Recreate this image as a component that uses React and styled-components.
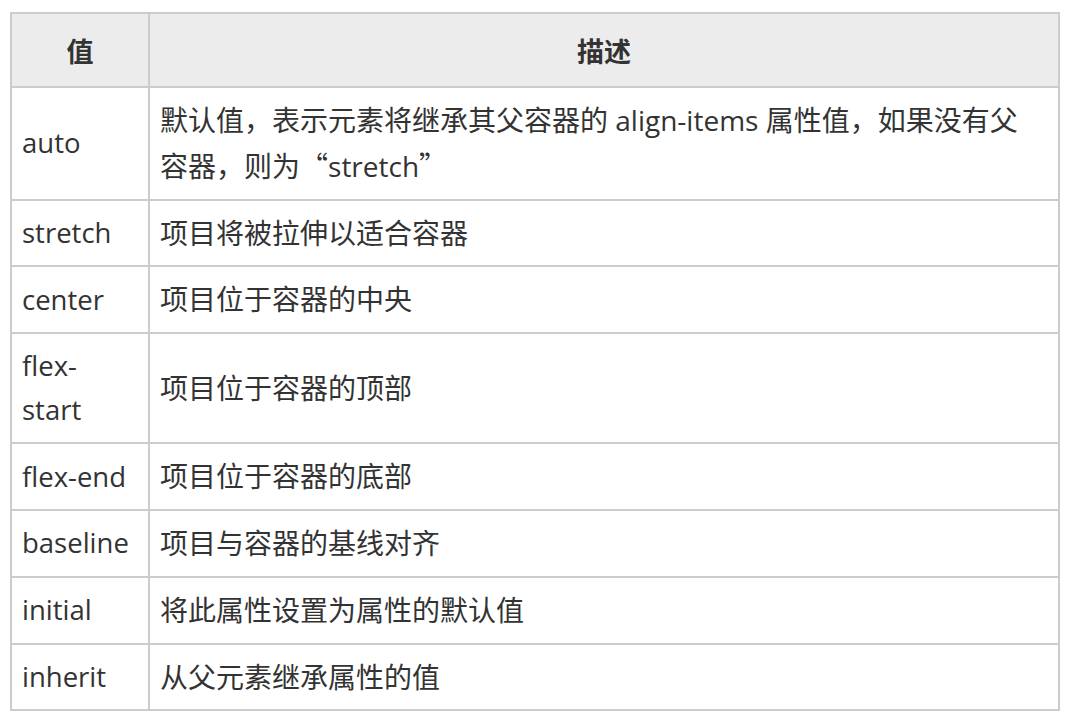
import styled, { createGlobalStyle } from "styled-components";

function App() {
  return (
    <>
      <GlobalStyle />
      <PageWrapper>
        <PropTable>
          <colgroup>
            <col style={{ width: "138px" }} />
            <col />
          </colgroup>
          <thead>
            <tr>
              <HeadCell>值</HeadCell>
              <HeadCell>描述</HeadCell>
            </tr>
          </thead>
          <tbody>
            {rows.map((row) => (
              <tr key={row.value}>
                <ValueCell>{row.value}</ValueCell>
                <BodyCell>{row.desc}</BodyCell>
              </tr>
            ))}
          </tbody>
        </PropTable>
      </PageWrapper>
    </>
  );
}

const GlobalStyle = createGlobalStyle`
  body {
    margin: 0;
    background: #ffffff;
    font-family: "Open Sans", "Noto Sans CJK SC", sans-serif;
    color: #333333;
  }
`;

const PageWrapper = styled.div`
  padding: 12px 0 0 10px;
`;

const PropTable = styled.table`
  width: 1050px;
  table-layout: fixed;
  border-collapse: separate;
  border-spacing: 0;

  border-top: 2px solid #cccccc;
  border-left: 2px solid #cccccc;
`;

const HeadCell = styled.th`
  height: 74px;
  padding: 0 10px;
  box-sizing: border-box;

  background-color: #ececec;
  border-right: 2px solid #cccccc;
  border-bottom: 2px solid #cccccc;

  font-size: 27px;
  font-weight: 700;
  text-align: center;
  vertical-align: middle;
`;

const BodyCell = styled.td`
  padding: 10px 28px 10px 10px;
  border-right: 2px solid #cccccc;
  border-bottom: 2px solid #cccccc;

  font-size: 28px;
  line-height: 1.6;
  text-align: left;
  vertical-align: middle;
`;

const ValueCell = styled(BodyCell)`
  padding-right: 14px;
  font-size: 27.5px;
`;

// full-width CJK quotes
const Quote = styled.span`
  font-family: "Noto Sans CJK SC", sans-serif;
`;

const rows = [
  {
    value: "auto",
    desc: (
      <>
        默认值，表示元素将继承其父容器的 align-items 属性值，如果没有父容器，则为<Quote>“</Quote>stretch<Quote>”</Quote>
      </>
    ),
  },
  { value: "stretch", desc: "项目将被拉伸以适合容器" },
  { value: "center", desc: "项目位于容器的中央" },
  { value: "flex-start", desc: "项目位于容器的顶部" },
  { value: "flex-end", desc: "项目位于容器的底部" },
  { value: "baseline", desc: "项目与容器的基线对齐" },
  { value: "initial", desc: "将此属性设置为属性的默认值" },
  { value: "inherit", desc: "从父元素继承属性的值" },
];

export default App;
